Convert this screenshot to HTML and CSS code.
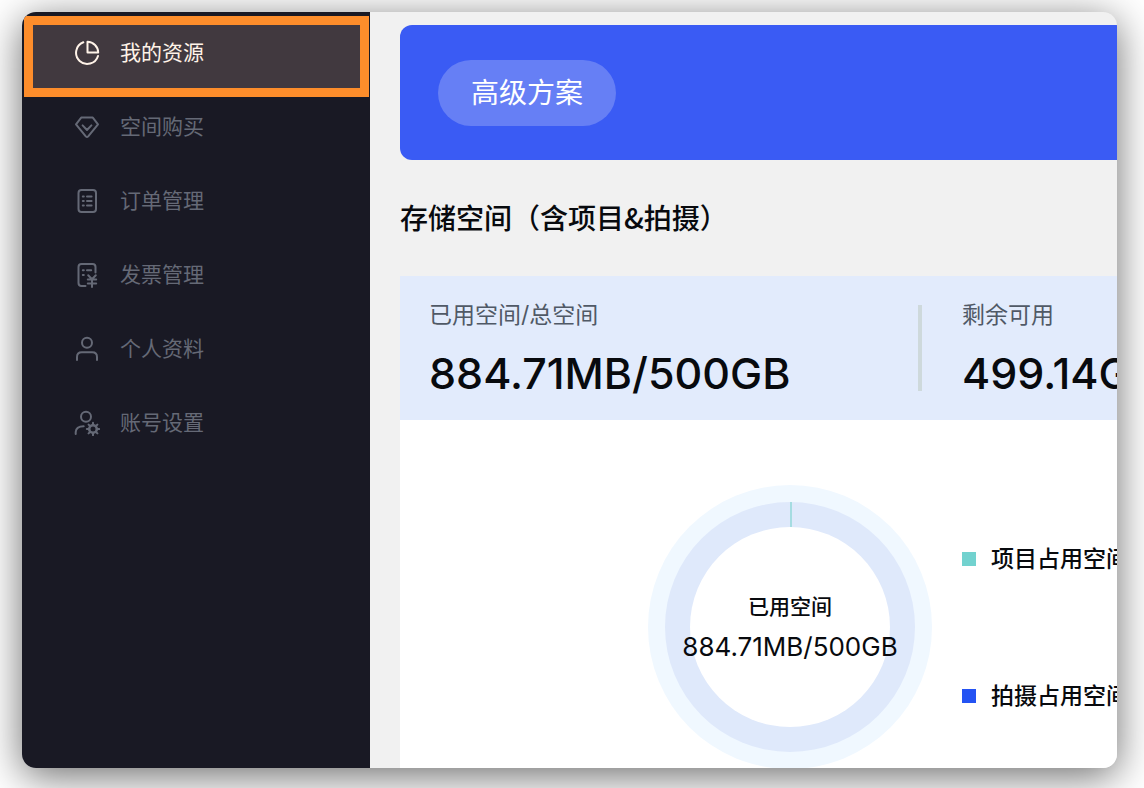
FILE: index.html
```html
<!DOCTYPE html>
<html lang="zh-CN">
<head>
<meta charset="utf-8">
<meta name="viewport" content="width=device-width, initial-scale=1">
<title>我的资源</title>
<link rel="stylesheet" href="styles.css">
</head>
<body>
<div class="window">
  <nav class="sidebar" aria-label="账户">
    <a class="nav-item active" href="#" aria-current="page">
      <svg class="icon" viewBox="0 0 26 26" aria-hidden="true"><path d="M9.3 2.3A11.2 11.2 0 1 0 24 16"/><path d="M13.5 1.8V12.5H24.2A10.8 10.8 0 0 0 13.5 1.8Z"/></svg>
      <span>我的资源</span>
    </a>
    <a class="nav-item" href="#">
      <svg class="icon" viewBox="0 0 26 26" aria-hidden="true"><path d="M7.2 3.6H18.8L24 10.3L14.2 22.4Q13 23.6 11.8 22.4L2 10.3Z"/><path d="M8.6 11.4L13 16L17.4 11.4"/></svg>
      <span>空间购买</span>
    </a>
    <a class="nav-item" href="#">
      <svg class="icon" viewBox="0 0 26 26" aria-hidden="true"><rect x="4.5" y="2" width="17.5" height="22" rx="3"/><path d="M8.8 8.5H9.8M13 8.5H17.6M8.8 13H9.8M13 13H17.6M8.8 17.5H9.8M13 17.5H17.6"/></svg>
      <span>订单管理</span>
    </a>
    <a class="nav-item" href="#">
      <svg class="icon" viewBox="0 0 26 26" aria-hidden="true"><path d="M11.5 24H7.5Q4.5 24 4.5 21V5Q4.5 2 7.5 2H18.5Q21.5 2 21.5 5V10.5"/><path d="M8.8 8.2H9.8M13 8.2H17.2M8.8 13H9.8"/><path d="M14.2 13.2L18 17.3L21.8 13.2M18 17.3V25M13.8 17.6H22.2M13.8 21.4H22.2"/></svg>
      <span>发票管理</span>
    </a>
    <a class="nav-item" href="#">
      <svg class="icon" viewBox="0 0 26 26" aria-hidden="true"><circle cx="13" cy="6.8" r="5"/><path d="M3 24V21Q3 16.3 7.7 16.3H18.3Q23 16.3 23 21V24"/></svg>
      <span>个人资料</span>
    </a>
    <a class="nav-item" href="#">
      <svg class="icon" viewBox="0 0 26 26" aria-hidden="true"><circle cx="12" cy="6.8" r="5"/><path d="M1.7 24V22Q2 16.3 9.7 16.2"/><circle cx="19" cy="19" r="3.8" stroke-width="2.6"/><path d="M19 15.2V12.8M19 22.8V25.2M15.2 19H12.8M22.8 19H25.2M16.3 16.3L14.6 14.6M21.7 16.3L23.4 14.6M16.3 21.7L14.6 23.4M21.7 21.7L23.4 23.4"/></svg>
      <span>账号设置</span>
    </a>
  </nav>
  <main class="content">
    <section class="banner"><span class="plan">高级方案</span></section>
    <h1 class="title">存储空间（含项目&amp;拍摄）</h1>
    <section class="card">
      <dl class="summary">
        <div class="stat used"><dt>已用空间/总空间</dt><dd>884.71MB/500GB</dd></div>
        <div class="stat"><dt>剩余可用</dt><dd>499.14GB</dd></div>
      </dl>
      <div class="chart">
        <div class="donut">
          <svg class="ring" viewBox="0 0 284 284" aria-hidden="true">
            <circle cx="142" cy="142" r="142" fill="#f0f8ff"/>
            <circle cx="142" cy="142" r="125" fill="#dfe9fb"/>
            <circle cx="142" cy="142" r="100" fill="#fff"/>
            <path d="M143 17V42" stroke="#a5dce1" stroke-width="2"/>
          </svg>
          <div class="donut-text"><span class="donut-label">已用空间</span><span class="donut-value">884.71MB/500GB</span></div>
        </div>
        <ul class="legend">
          <li><i class="swatch project"></i>项目占用空间</li>
          <li><i class="swatch shoot"></i>拍摄占用空间</li>
        </ul>
      </div>
    </section>
  </main>
</div>
</body>
</html>
```
FILE: styles.css
```css
*,
*::before { box-sizing: border-box; }

body {
  margin: 0;
  min-height: 100vh;
  padding: 12px 27px 20px 22px;
  display: flex;
  background: #fff;
  color: #080a0e;
  font-family: Inter, "Noto Sans CJK SC", sans-serif;
}

.window {
  flex: 1;
  min-width: 0;
  display: flex;
  overflow: hidden;
  border-radius: 14px;
  background: #f1f1f1;
  box-shadow: 0 8px 40px rgba(0, 0, 0, 0.58);
}

.sidebar {
  position: relative;
  flex: 0 0 348px;
  padding-top: 4px;
  background: #191924;
}

.nav-item {
  display: flex;
  align-items: center;
  gap: 20px;
  height: 74px;
  padding-left: 52px;
  color: #656976;
  font-size: 21px;
  line-height: 32px;
  text-decoration: none;
}

.nav-item.active { color: #fff3e8; }

.nav-item.active::before {
  content: "";
  position: absolute;
  top: 4px;
  left: 2px;
  right: 1px;
  height: 81px;
  border: 9px solid #fd8d2b;
  background: #41393f;
}

.nav-item > * { position: relative; }

.icon {
  width: 26px;
  height: 26px;
  fill: none;
  stroke: currentColor;
  stroke-width: 2;
  stroke-linecap: round;
  stroke-linejoin: round;
}

.content {
  flex: 1;
  min-width: 0;
  padding: 13px 0 0 30px;
  display: flex;
  flex-direction: column;
  white-space: nowrap;
}

.banner {
  height: 135px;
  padding-left: 38px;
  display: flex;
  align-items: center;
  border-radius: 12px 0 0 12px;
  background: #3a5bf4;
}

.plan {
  padding: 12px 33px;
  border-radius: 33px;
  background: #667ff5;
  color: #fff;
  font-size: 28px;
  line-height: 42px;
}

.title {
  margin: 36px 0 38px;
  font-size: 28px;
  font-weight: 500;
  line-height: 42px;
  font-family: "Noto Sans CJK SC", sans-serif;
}

.card {
  flex: 1;
  display: flex;
  flex-direction: column;
  background: #fff;
}

.summary {
  margin: 0;
  padding: 29px 0 29px 29px;
  display: flex;
  gap: 40px;
  background: #e2ebfc;
}

.stat {
  height: 86px;
  display: flex;
  flex-direction: column;
  justify-content: space-between;
}

.used {
  flex: 0 0 493px;
  border-right: 4px solid #ced9dc;
}

.stat dt {
  color: #505966;
  font-size: 23px;
  line-height: 20px;
}

.stat dd {
  margin: 0;
  font-size: 43px;
  font-weight: 500;
  line-height: 36px;
}

.chart {
  padding: 65px 0 0 248px;
  display: flex;
  gap: 30px;
}

.donut {
  position: relative;
  flex: 0 0 284px;
  height: 283px;
}

.ring { display: block; width: 284px; height: 284px; }

.donut-text {
  position: absolute;
  inset: 0;
  display: flex;
  flex-direction: column;
  align-items: center;
  justify-content: center;
  font-weight: 500;
}

.donut-label { font-size: 21px; line-height: 40px; }
.donut-value { font-size: 26px; font-weight: 400; line-height: 40px; }

.legend {
  margin: 0;
  padding: 2px 0 0;
  display: flex;
  flex-direction: column;
  justify-content: center;
  gap: 103px;
  list-style: none;
  font-size: 23px;
  font-weight: 500;
  line-height: 34px;
}

.legend li {
  display: flex;
  align-items: center;
  gap: 15px;
}

.swatch { width: 14px; height: 14px; }
.project { background: #72d2cf; }
.shoot { background: #2453f3; }
```
